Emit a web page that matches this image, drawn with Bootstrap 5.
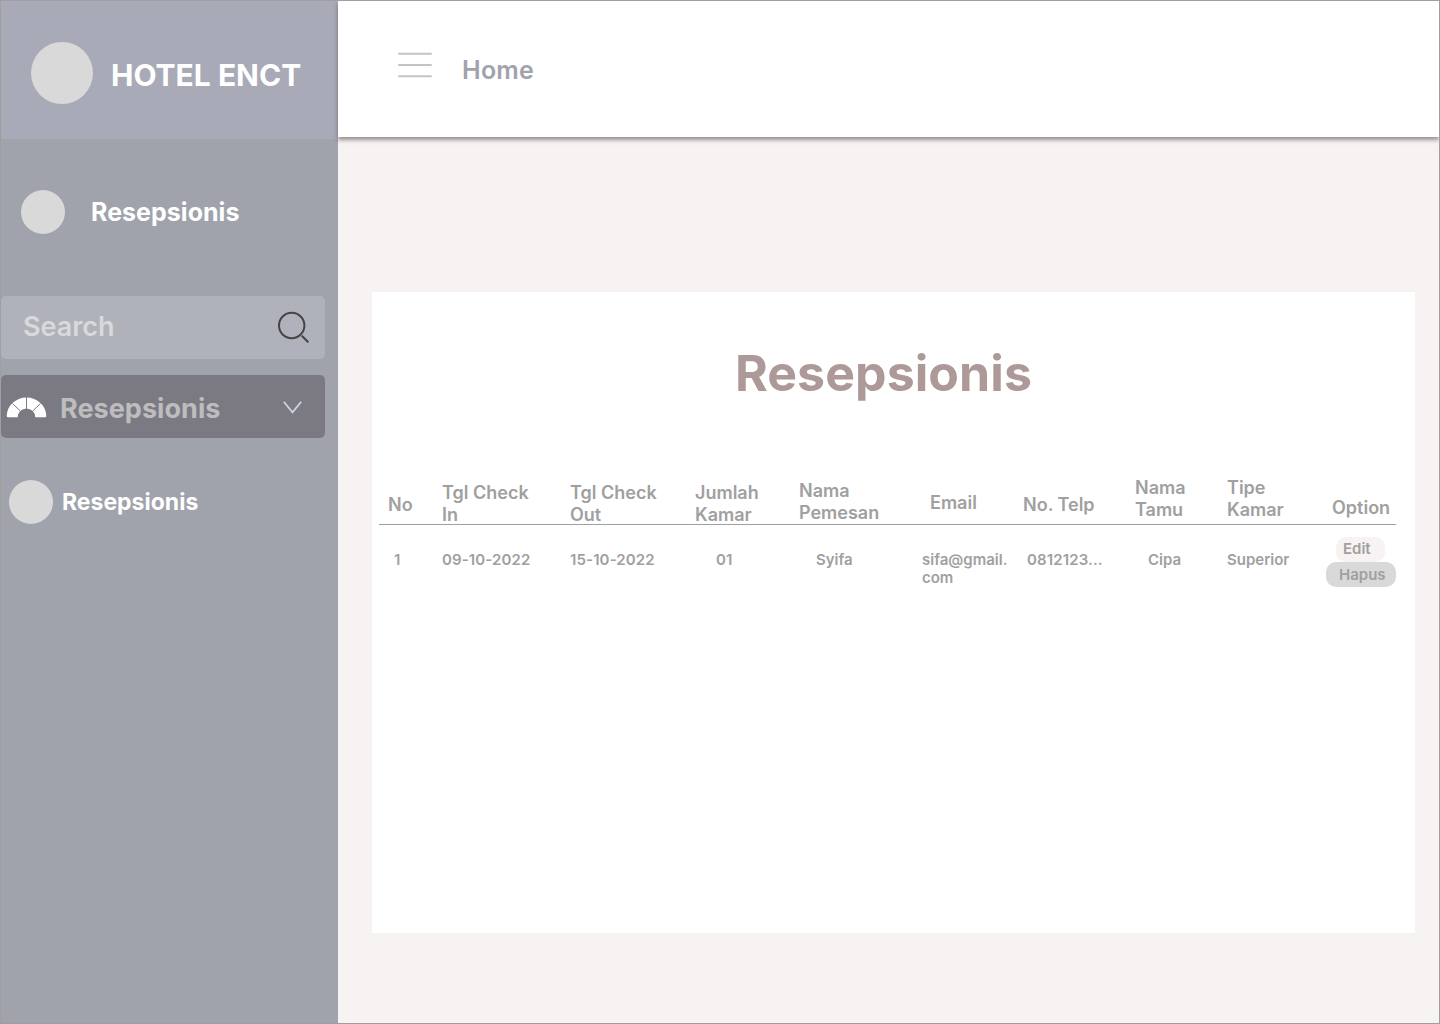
<!DOCTYPE html>
<html lang="id">
<head>
<meta charset="utf-8">
<title>Hotel Enct</title>
<link href="https://cdn.jsdelivr.net/npm/bootstrap@5.3.0/dist/css/bootstrap.min.css" rel="stylesheet">
<style>
body{font-family:Inter,"Liberation Sans",sans-serif;background:#f7f3f2;line-height:1.21}
.frame{height:1024px;border:1px solid #9f9f9f;overflow:hidden}
.sidebar{width:337px;background:#a0a3ac}
.brand{height:138px;background:#a8aab7;padding:3px 0 0 30px;gap:18px}
.brand-name{font-size:30px;padding-top:8px}
.dot{background:#d9d9d9;width:44px;height:44px}
.dot-lg{width:62px;height:62px;margin-bottom:-2px}
.user{height:44px;margin-top:51px;padding-left:20px;gap:26px;font-size:25px;letter-spacing:.03px}
.side-box{width:324px;height:63px;border-radius:5px}
.search{margin-top:62px;background:#afb2ba;padding:0 16px 0 22px;font-size:27px;letter-spacing:-.05px;color:#d9d9d9}
.search svg{margin-top:-1px}
.menu-on{margin-top:16px;background:#7b7a83;color:#bdbdbd;padding:0 23px 0 5px;font-size:27px}
.menu-on span{padding:5px 0 0 13px;letter-spacing:.04px}
.menu-on .chev{margin-top:1px}
.sub{margin-top:42px;padding-left:8px;gap:9px;font-size:23px}
.sub-text{padding-top:2px}
.topbar{height:136px;box-shadow:0 3px 4px rgba(60,45,50,.5);padding-left:60px;gap:30px;color:#a0a3ac;font-size:25px}
.burger{margin-bottom:9px}
.home{padding-top:2px;letter-spacing:.25px}
.panel{width:1043px;height:641px;margin:155px 0 0 34px;padding:51px 19px 0 7px}
.title{font-size:50px;line-height:60px;color:#ae9999;padding-right:8px;letter-spacing:.08px}
.grid-table{table-layout:fixed;width:1017px;margin-top:67px;color:#a0a0a0}
.grid-table th{height:54.5px;border-bottom:1px solid #a0a0a0;padding:0;font-size:18px;line-height:22px;font-weight:600;vertical-align:top}
.grid-table th div{height:22px}
.grid-table thead tr{height:55px}
.grid-table td{padding:26px 0 0;font-size:15px;line-height:18px;font-weight:600;vertical-align:top}
.grid-table{border-collapse:separate;border-spacing:0}
.grid-table td.acts{padding-top:12px}
.grid-table td.num{letter-spacing:.13px}
.chip{height:25px;border-radius:10px;line-height:24px}
.chip-edit{width:49px;margin-left:10px;background:#f7f3f2;padding-left:7px}
.chip-del{width:70px;background:#d9d9d9;padding-left:13px;line-height:26px}
.in6{padding-left:6px}.in9{padding-left:9px}.in13{padding-left:13px}.in15{padding-left:15px}.in17{padding-left:17px}.in21{padding-left:21px}
.grid-table .t7{padding-top:7px}.grid-table .t10{padding-top:10px}.grid-table .t12{padding-top:12px}
.grid-table .t22{padding-top:22px}.grid-table .t24{padding-top:24px}.grid-table .t27{padding-top:27px}
.w-no{width:63px}.w-in{width:128px}.w-out{width:125px}.w-qty{width:104px}.w-name{width:123px}
.w-mail{width:101px}.w-tel{width:112px}.w-guest{width:92px}.w-type{width:99px}.w-opt{width:70px}
</style>
<script src="https://cdn.jsdelivr.net/npm/bootstrap@5.3.0/dist/js/bootstrap.bundle.min.js"></script>
</head>
<body>
<div class="frame d-flex">
  <aside class="sidebar flex-shrink-0 text-white fw-bold">
    <div class="brand d-flex align-items-center"><span class="dot dot-lg rounded-circle"></span><span class="brand-name">HOTEL ENCT</span></div>
    <div class="user d-flex align-items-center"><span class="dot rounded-circle"></span><span>Resepsionis</span></div>
    <div class="side-box search d-flex align-items-center justify-content-between fw-semibold">
      <span>Search</span>
      <svg width="32" height="32" viewBox="0 0 32 32" fill="none" stroke="#444" stroke-width="2"><circle cx="14.700" cy="14.500" r="12.700"/><path d="M24.800 24.800L31.300 31.300"/></svg>
    </div>
    <div class="side-box menu-on d-flex align-items-center">
      <svg width="41" height="22" viewBox="0 0 41 22"><path d="M.7 20Q.7 21.300 2 21.300H11.700A8.800 8.800 0 0 1 29.300 21.300H39Q40.300 21.300 40.300 20A19.800 18.500 0 0 0 .7 20Z" fill="#fff"/><path d="M20.500 0V13M6.500 7.500L14.300 15M34.500 7.500L26.700 15" stroke="#7b7a83"/></svg>
      <span class="flex-grow-1">Resepsionis</span>
      <svg class="chev" width="19" height="13" viewBox="0 0 19 13" fill="none" stroke="#cdd3e6" stroke-width="1.800"><path d="M.8.8L9.500 11.300L18.200.8"/></svg>
    </div>
    <div class="sub d-flex align-items-center"><span class="dot rounded-circle"></span><span class="sub-text">Resepsionis</span></div>
  </aside>
  <main class="flex-grow-1">
    <header class="topbar bg-white d-flex align-items-center fw-semibold">
      <svg class="burger" width="34" height="26" viewBox="0 0 34 26" stroke="#c4c4c4" stroke-width="2" stroke-linecap="round"><path d="M1 1.800H33M1 13.100H33M1 24.300H33"/></svg>
      <span class="home">Home</span>
    </header>
    <section class="panel bg-white">
      <h1 class="title text-center fw-bold mb-0">Resepsionis</h1>
      <table class="grid-table">
        <colgroup><col class="w-no"><col class="w-in"><col class="w-out"><col class="w-qty"><col class="w-name"><col class="w-mail"><col class="w-tel"><col class="w-guest"><col class="w-type"><col class="w-opt"></colgroup>
        <thead><tr>
          <th class="t24"><div class="in9">No</div></th>
          <th class="t12"><div>Tgl Check<br>In</div></th>
          <th class="t12"><div>Tgl Check<br>Out</div></th>
          <th class="t12"><div>Jumlah<br>Kamar</div></th>
          <th class="t10"><div>Nama<br>Pemesan</div></th>
          <th class="t22"><div class="ps-2">Email</div></th>
          <th class="t24"><div>No. Telp</div></th>
          <th class="t7"><div>Nama<br>Tamu</div></th>
          <th class="t7"><div>Tipe<br>Kamar</div></th>
          <th class="t27"><div class="in6">Option</div></th>
        </tr></thead>
        <tbody><tr>
          <td><div class="in15">1</div></td>
          <td class="num">09-10-2022</td>
          <td class="num">15-10-2022</td>
          <td><div class="in21">01</div></td>
          <td><div class="in17">Syifa</div></td>
          <td>sifa@gmail.<br>com</td>
          <td class="num"><div class="ps-1">0812123...</div></td>
          <td><div class="in13">Cipa</div></td>
          <td>Superior</td>
          <td class="acts"><div class="chip chip-edit">Edit</div><div class="chip chip-del">Hapus</div></td>
        </tr></tbody>
      </table>
    </section>
  </main>
</div>
</body>
</html>
